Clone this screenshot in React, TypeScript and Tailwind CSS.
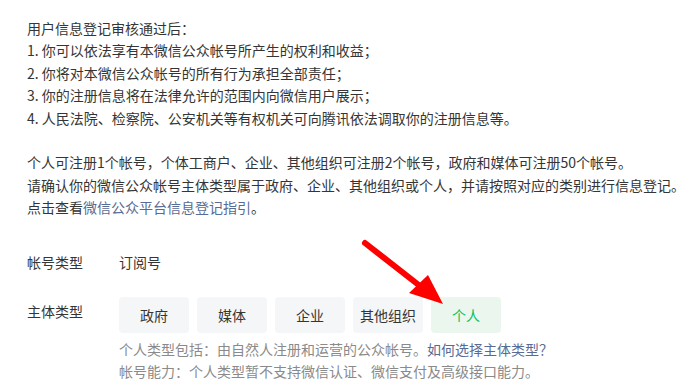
import React from "react";

const font = { fontFamily: '"Microsoft YaHei", "Noto Sans CJK SC", "Noto Sans", sans-serif' };

export default function App() {
  const types = ["政府", "媒体", "企业", "其他组织", "个人"];
  return (
    <div className="relative w-[690px] h-[386px] overflow-hidden bg-white text-[14px] leading-[22.4px] text-[#353535]" style={font}>
      <div className="pl-[27px] pt-[17px]">
        <p>用户信息登记审核通过后：</p>
        <p>1. 你可以依法享有本微信公众帐号所产生的权利和收益；</p>
        <p>2. 你将对本微信公众帐号的所有行为承担全部责任；</p>
        <p>3. 你的注册信息将在法律允许的范围内向微信用户展示；</p>
        <p>4. 人民法院、检察院、公安机关等有权机关可向腾讯依法调取你的注册信息等。</p>
        <p className="h-[22.4px]"></p>
        <p>个人可注册1个帐号，个体工商户、企业、其他组织可注册2个帐号，政府和媒体可注册50个帐号。</p>
        <p className="whitespace-nowrap">请确认你的微信公众帐号主体类型属于政府、企业、其他组织或个人，并请按照对应的类别进行信息登记。</p>
        <p>
          点击查看<span className="text-[#576b95]">微信公众平台信息登记指引</span>。
        </p>

        <div className="mt-[32px] flex">
          <div className="w-[92px]">帐号类型</div>
          <div>订阅号</div>
        </div>

        <div className="mt-[24px] flex">
          <div className="w-[92px] pt-[3px]">主体类型</div>
          <div>
            <div className="flex gap-[8px]">
              {types.map((t) => (
                <div
                  key={t}
                  className={
                    "w-[70px] h-[36px] flex items-center justify-center rounded-[4px] " +
                    (t === "个人" ? "bg-[#ebf7ee] text-[#07c160]" : "bg-[#f5f6f7] text-[#353535]")
                  }
                >
                  {t}
                </div>
              ))}
            </div>
            <div className="mt-[5px] text-[#8a8a8a]">
              <p>
                个人类型包括：由自然人注册和运营的公众帐号。<span className="text-[#576b95]">如何选择主体类型？</span>
              </p>
              <p>帐号能力：个人类型暂不支持微信认证、微信支付及高级接口能力。</p>
            </div>
          </div>
        </div>
      </div>

      <svg className="absolute left-0 top-0 pointer-events-none" width="690" height="386" viewBox="0 0 690 386">
        <line x1="365" y1="243" x2="420" y2="286" stroke="#ff0000" strokeWidth="6" strokeLinecap="round" />
        <polygon points="443,304 409,293 428,275" fill="#ff0000" />
      </svg>
    </div>
  );
}
